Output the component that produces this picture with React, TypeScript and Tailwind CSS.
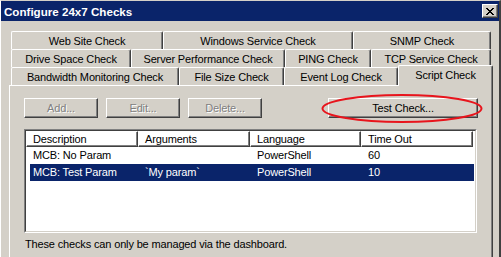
import React from "react";

const font = { fontFamily: '"Liberation Sans", Arial, sans-serif' };

function Tab({ label, w }: { label: string; w: number }) {
  return (
    <div
      style={{ width: w }}
      className="h-[18px] shrink-0 flex items-center justify-center border-l border-t border-r border-l-white border-t-white border-r-[#404040] rounded-tl-[2px] rounded-tr-[2px] shadow-[inset_-1px_0_0_#808080] pt-[2px] whitespace-nowrap"
    >
      {label}
    </div>
  );
}

function Btn({ label, w, disabled }: { label: string; w: number; disabled?: boolean }) {
  return (
    <div
      style={{ width: w }}
      className="h-[20px] shrink-0 border border-t-white border-l-white border-r-[#404040] border-b-[#404040] shadow-[inset_-1px_-1px_0_#808080] flex items-center justify-center"
    >
      <span
        className={
          disabled
            ? "text-[#808080] [text-shadow:1px_1px_0_#ffffff]"
            : "text-black"
        }
      >
        {label}
      </span>
    </div>
  );
}

function HeaderCell({ label, w }: { label: string; w: number }) {
  return (
    <div
      style={{ width: w }}
      className="h-[16px] shrink-0 border border-t-white border-l-white border-r-[#404040] border-b-[#404040] shadow-[inset_-1px_-1px_0_#808080] pl-[6px] flex items-center"
    >
      {label}
    </div>
  );
}

function Row({ cells, selected }: { cells: string[]; selected?: boolean }) {
  const widths = [112, 112, 111, 109];
  return (
    <div
      className={
        "ml-[4px] w-[444px] h-[17px] flex items-center " +
        (selected ? "bg-[#0a246a] text-white" : "text-black")
      }
    >
      {cells.map((c, i) => (
        <div key={i} style={{ width: widths[i] }} className="shrink-0 pl-[3px] whitespace-pre">
          {c}
        </div>
      ))}
    </div>
  );
}

export default function App() {
  return (
    <div
      style={font}
      className="relative w-[501px] h-[257px] overflow-hidden bg-[#d4d0c8] text-[11px] tracking-[-0.15px] text-black leading-[13px] border-l border-t border-l-white border-t-[#d4d0c8] border-r-2 border-r-[#404040]"
    >
      {/* title bar */}
      <div className="h-[20px] bg-[#0a246a] flex items-center justify-between pl-[3px] pr-[1px]">
        <span className="text-white font-bold text-[11.6px] tracking-[0px] pt-[1px]">
          Configure 24x7 Checks
        </span>
        <div className="w-[16px] h-[14px] bg-[#d4d0c8] border border-t-white border-l-white border-r-[#404040] border-b-[#404040] shadow-[inset_-1px_-1px_0_#808080] flex items-center justify-center">
          <svg width="8" height="7" viewBox="0 0 8 7" shapeRendering="crispEdges">
            <path
              fill="#000"
              d="M0 0h2v1H0zM6 0h2v1H6zM1 1h2v1H1zM5 1h2v1H5zM2 2h4v1H2zM3 3h2v1H3zM2 4h4v1H2zM1 5h2v1H1zM5 5h2v1H5zM0 6h2v1H0zM6 6h2v1H6z"
            />
          </svg>
        </div>
      </div>

      {/* tab control */}
      <div className="ml-[8px] mt-[10px] w-[484px]">
        <div className="pl-[2px] flex flex-col">
          <div className="flex">
            <Tab label="Web Site Check" w={152} />
            <Tab label="Windows Service Check" w={190} />
            <Tab label="SNMP Check" w={138} />
          </div>
          <div className="flex">
            <Tab label="Drive Space Check" w={120} />
            <Tab label="Server Performance Check" w={154} />
            <Tab label="PING Check" w={86} />
            <Tab label="TCP Service Check" w={120} />
          </div>
          <div className="flex h-[18px]">
            <Tab label="Bandwidth Monitoring Check" w={168} />
            <Tab label="File Size Check" w={105} />
            <Tab label="Event Log Check" w={114} />
            <div className="relative z-10 -mt-[2px] w-[95px] h-[21px] shrink-0 bg-[#d4d0c8] border-l border-t border-r border-l-white border-t-white border-r-[#404040] rounded-tl-[2px] rounded-tr-[2px] shadow-[inset_-1px_0_0_#808080] flex justify-center pt-[3px]">
              Script Check
            </div>
          </div>
        </div>

        {/* panel */}
        <div className="h-[200px] border-l border-t border-r border-l-white border-t-white border-r-[#404040] shadow-[inset_-1px_0_0_#808080] pt-[12px] pl-[14px] pr-[14px]">
          <div className="flex">
            <div className="flex gap-[8px]">
              <Btn label="Add..." w={74} disabled />
              <Btn label="Edit..." w={74} disabled />
              <Btn label="Delete..." w={74} disabled />
            </div>
            <div className="ml-auto">
              <Btn label="Test Check..." w={150} />
            </div>
          </div>

          {/* list view */}
          <div className="mt-[11px] w-[453px] h-[104px] bg-white border border-t-[#808080] border-l-[#808080] border-r-white border-b-white">
            <div className="h-full border border-t-[#404040] border-l-[#404040] border-r-[#d4d0c8] border-b-[#d4d0c8]">
              <div className="flex">
                <HeaderCell label="Description" w={112} />
                <HeaderCell label="Arguments" w={112} />
                <HeaderCell label="Language" w={111} />
                <HeaderCell label="Time Out" w={112} />
              </div>
              <Row cells={["MCB: No Param", "", "PowerShell", "60"]} />
              <Row cells={["MCB: Test Param", "`My param`", "PowerShell", "10"]} selected />
            </div>
          </div>

          <div className="mt-[5px] ml-[1px]">
            These checks can only be managed via the dashboard.
          </div>
        </div>
      </div>

      {/* red annotation ellipse */}
      <svg
        className="absolute left-[319px] top-[91px] pointer-events-none"
        width="164"
        height="33"
        viewBox="0 0 164 33"
      >
        <ellipse cx="82" cy="16.5" rx="79.5" ry="13.5" fill="none" stroke="#e8141c" strokeWidth="2" />
      </svg>
    </div>
  );
}
